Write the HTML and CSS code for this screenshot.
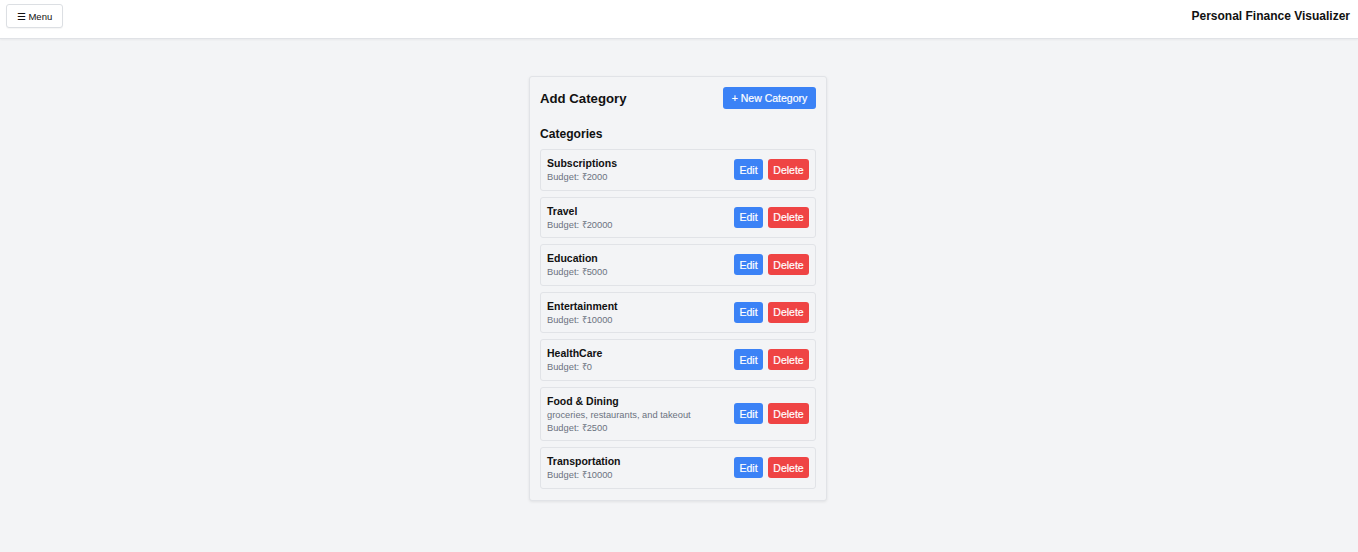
FILE: index.html
```html
<!DOCTYPE html>
<html>
<head>
<meta charset="utf-8">
<link rel="stylesheet" href="styles.css">
</head>
<body>
<header class="topbar">
  <button class="menu-btn">☰ Menu</button>
  <h1 class="app-title">Personal Finance Visualizer</h1>
</header>
<main class="main">
  <section class="card">
    <div class="card-head">
      <h2 class="card-title">Add Category</h2>
      <button class="btn btn-blue btn-new">+ New Category</button>
    </div>
    <h3 class="list-title">Categories</h3>
    <ul class="list">
      <li class="item">
        <div class="info"><div class="name">Subscriptions</div><div class="sub">Budget: ₹2000</div></div>
        <div class="actions"><button class="btn btn-blue">Edit</button><button class="btn btn-red">Delete</button></div>
      </li>
      <li class="item">
        <div class="info"><div class="name">Travel</div><div class="sub">Budget: ₹20000</div></div>
        <div class="actions"><button class="btn btn-blue">Edit</button><button class="btn btn-red">Delete</button></div>
      </li>
      <li class="item">
        <div class="info"><div class="name">Education</div><div class="sub">Budget: ₹5000</div></div>
        <div class="actions"><button class="btn btn-blue">Edit</button><button class="btn btn-red">Delete</button></div>
      </li>
      <li class="item">
        <div class="info"><div class="name">Entertainment</div><div class="sub">Budget: ₹10000</div></div>
        <div class="actions"><button class="btn btn-blue">Edit</button><button class="btn btn-red">Delete</button></div>
      </li>
      <li class="item">
        <div class="info"><div class="name">HealthCare</div><div class="sub">Budget: ₹0</div></div>
        <div class="actions"><button class="btn btn-blue">Edit</button><button class="btn btn-red">Delete</button></div>
      </li>
      <li class="item">
        <div class="info"><div class="name">Food &amp; Dining</div><div class="sub">groceries, restaurants, and takeout</div><div class="sub">Budget: ₹2500</div></div>
        <div class="actions"><button class="btn btn-blue">Edit</button><button class="btn btn-red">Delete</button></div>
      </li>
      <li class="item">
        <div class="info"><div class="name">Transportation</div><div class="sub">Budget: ₹10000</div></div>
        <div class="actions"><button class="btn btn-blue">Edit</button><button class="btn btn-red">Delete</button></div>
      </li>
    </ul>
  </section>
</main>
</body>
</html>
```

FILE: styles.css
```css
* { box-sizing: border-box; }
html, body { margin: 0; padding: 0; }
body {
  font-family: "Liberation Sans", Arial, sans-serif;
  background: #f3f4f6;
  color: #111;
  height: 552px;
}
.topbar {
  height: 39px;
  background: #fff;
  border-bottom: 1px solid #e0e2e6;
  box-shadow: 0 1px 2px rgba(0,0,0,0.05);
  display: flex;
  align-items: flex-start;
  justify-content: space-between;
  padding: 4px 8px 0 6px;
}
.menu-btn {
  font-family: inherit;
  font-size: 9.5px;
  color: #111;
  background: #fff;
  border: 1px solid #dcdfe3;
  border-radius: 3px;
  height: 24px;
  width: 57px;
  padding: 0;
  box-shadow: 0 1px 1px rgba(0,0,0,0.04);
}
.app-title {
  margin: 5px 0 0 0;
  font-size: 12px;
  font-weight: bold;
  color: #111;
}
.main {
  display: flex;
  justify-content: center;
  padding-top: 37px;
}
.card {
  width: 298px;
  margin-left: -2px;
  background: #f3f4f6;
  border: 1px solid #e1e3e7;
  border-radius: 3px;
  box-shadow: 0 1px 3px rgba(0,0,0,0.08);
  padding: 10px 10px 11px 10px;
}
.card-head {
  display: flex;
  justify-content: space-between;
  align-items: center;
}
.card-title {
  margin: 0;
  font-size: 13.2px;
  font-weight: bold;
}
.btn {
  font-family: inherit;
  border: none;
  border-radius: 3px;
  color: #fff;
  font-size: 10.5px;
  padding: 0;
  height: 21px;
  -webkit-text-stroke: 0.2px #fff;
}
.btn-blue { background: #3b82f6; }
.btn-red { background: #ef4444; }
.btn-new {
  width: 93px;
  height: 22px;
}
.list-title {
  margin: 17.5px 0 7.5px 0;
  font-size: 12.1px;
  font-weight: bold;
  line-height: 15px;
}
.list {
  list-style: none;
  margin: 0;
  padding: 0;
  display: flex;
  flex-direction: column;
  gap: 6px;
}
.item {
  display: flex;
  justify-content: space-between;
  align-items: center;
  border: 1px solid #e1e3e7;
  border-radius: 3px;
  padding: 6.25px 6px 6.25px 6px;
}
.name {
  font-size: 10.5px;
  font-weight: bold;
  line-height: 14px;
}
.sub {
  font-size: 9.3px;
  color: #6b7280;
  line-height: 12px;
  margin-top: 1px;
}
.actions {
  display: flex;
  gap: 5px;
}
.actions .btn-blue { width: 29px; }
.actions .btn-red { width: 41px; }
```
